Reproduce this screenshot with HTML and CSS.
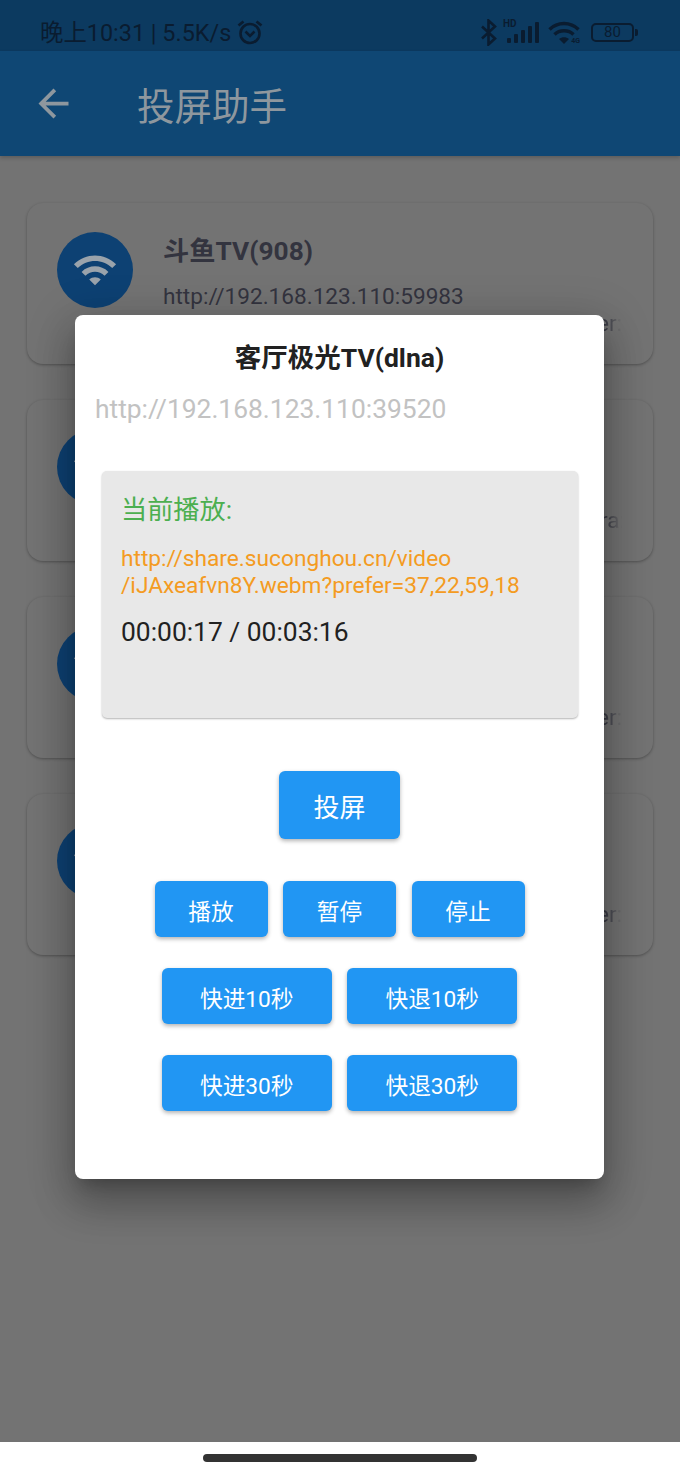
FILE: index.html

```html
<!DOCTYPE html>
<html lang="zh-CN">
<head>
  <meta charset="UTF-8" />
  <meta name="viewport" content="width=device-width, initial-scale=1.0">
  <title>投屏助手</title>
  <link rel="stylesheet" href="styles.css">
</head>
<body>
<div class="screen">
  <div class="status-bar">
    <span class="status-text">晚上10:31 | 5.5K/s</span>
    <svg class="alarm" width="28" height="26" viewBox="0 0 28 26">
      <circle cx="14" cy="14.5" r="9.5" fill="none" stroke-width="2.6"/>
      <path d="M9.5 12.5l4.5 4.5 4.5-4.5" fill="none" stroke-width="2.6"/>
      <path d="M2.5 6.5l5-4M25.5 6.5l-5-4" fill="none" stroke-width="2.8"/>
    </svg>
    <div class="status-icons">
      <svg class="bluetooth" width="18" height="27" viewBox="0 0 18 27">
        <path d="M2 7.5l13 12-6.5 6V1.500l6.500 6-13 12" fill="none" stroke-width="2.6"/>
      </svg>
      <div class="signal">
        <span class="hd">HD</span>
        <svg width="34" height="22" viewBox="0 0 34 22">
          <rect x="1" y="16" width="4" height="5" rx="1"/>
          <rect x="8" y="12" width="4" height="9" rx="1"/>
          <rect x="15" y="8" width="4" height="13" rx="1"/>
          <rect x="22" y="4" width="4" height="17" rx="1"/>
          <rect x="29" y="0" width="4" height="21" rx="1"/>
        </svg>
      </div>
      <div class="wifi-status">
        <svg width="32" height="23" viewBox="0 0 32 23">
          <path d="M1.500 8.500C9.500 0.500 22.500 0.500 30.500 8.500" fill="none" stroke-width="3.400"/>
          <path d="M6.500 13.500C11.500 8.500 20.500 8.500 25.500 13.500" fill="none" stroke-width="3.400"/>
          <path d="M11 18l5 5 5-5C18 15.500 14 15.500 11 18z"/>
        </svg>
        <span class="wifi-tag">4G</span>
      </div>
      <div class="battery">
        <span class="battery-body">80</span>
        <span class="battery-nub"></span>
      </div>
    </div>
  </div>

  <div class="app-bar">
    <svg class="back" width="45" height="45" viewBox="0 0 24 24">
      <path d="M20 11H7.830l5.590-5.590L12 4l-8 8 8 8 1.410-1.410L7.830 13H20v-2z"/>
    </svg>
    <h1>投屏助手</h1>
  </div>

  <div class="device-list">
    <div class="device-card">
      <div class="device-icon">
        <svg width="46" height="46" viewBox="0 0 24 24"><path d="M1 9l2 2c4.970-4.970 13.030-4.970 18 0l2-2C16.930 2.930 7.080 2.930 1 9zm8 8l3 3 3-3c-1.650-1.660-4.340-1.660-6 0zm-4-4l2 2c2.760-2.760 7.240-2.760 10 0l2-2C15.140 9.140 8.870 9.140 5 13z"/></svg>
      </div>
      <div class="device-info">
        <div class="device-name">斗鱼TV(908)</div>
        <div class="device-url">http://192.168.123.110:59983</div>
        <div class="device-type">urn:schemas-upnp-org:device:MediaRenderer:1</div>
      </div>
    </div>
    <div class="device-card">
      <div class="device-icon">
        <svg width="46" height="46" viewBox="0 0 24 24"><path d="M1 9l2 2c4.970-4.970 13.030-4.970 18 0l2-2C16.930 2.930 7.080 2.930 1 9zm8 8l3 3 3-3c-1.650-1.660-4.340-1.660-6 0zm-4-4l2 2c2.760-2.760 7.240-2.760 10 0l2-2C15.140 9.140 8.870 9.140 5 13z"/></svg>
      </div>
      <div class="device-info">
        <div class="device-name">客厅极光TV(dlna)</div>
        <div class="device-url">http://192.168.123.110:39520</div>
        <div class="device-type">urn:schemas-upnp-org:device:UMediaCamera:1</div>
      </div>
    </div>
    <div class="device-card">
      <div class="device-icon">
        <svg width="46" height="46" viewBox="0 0 24 24"><path d="M1 9l2 2c4.970-4.970 13.030-4.970 18 0l2-2C16.930 2.930 7.080 2.930 1 9zm8 8l3 3 3-3c-1.650-1.660-4.340-1.660-6 0zm-4-4l2 2c2.760-2.760 7.240-2.760 10 0l2-2C15.140 9.140 8.870 9.140 5 13z"/></svg>
      </div>
      <div class="device-info">
        <div class="device-name">斗鱼TV(908)</div>
        <div class="device-url">http://192.168.123.110:59983</div>
        <div class="device-type">urn:schemas-upnp-org:device:MediaRenderer:1</div>
      </div>
    </div>
    <div class="device-card">
      <div class="device-icon">
        <svg width="46" height="46" viewBox="0 0 24 24"><path d="M1 9l2 2c4.970-4.970 13.030-4.970 18 0l2-2C16.930 2.930 7.080 2.930 1 9zm8 8l3 3 3-3c-1.650-1.660-4.340-1.660-6 0zm-4-4l2 2c2.760-2.760 7.240-2.760 10 0l2-2C15.140 9.140 8.870 9.140 5 13z"/></svg>
      </div>
      <div class="device-info">
        <div class="device-name">斗鱼TV(908)</div>
        <div class="device-url">http://192.168.123.110:59983</div>
        <div class="device-type">urn:schemas-upnp-org:device:MediaRenderer:1</div>
      </div>
    </div>
  </div>

  <div class="dialog">
    <h2>客厅极光TV(dlna)</h2>
    <div class="dialog-url">http://192.168.123.110:39520</div>
    <div class="now-playing">
      <div class="now-label">当前播放:</div>
      <div class="now-link">http://share.suconghou.cn/video<br>/iJAxeafvn8Y.webm?prefer=37,22,59,18</div>
      <div class="now-time">00:00:17 / 00:03:16</div>
    </div>
    <div class="btn-row cast-row"><button class="btn btn-cast">投屏</button></div>
    <div class="btn-row"><button class="btn btn-small">播放</button><button class="btn btn-small">暂停</button><button class="btn btn-small">停止</button></div>
    <div class="btn-row"><button class="btn btn-wide">快进10秒</button><button class="btn btn-wide">快退10秒</button></div>
    <div class="btn-row"><button class="btn btn-wide">快进30秒</button><button class="btn btn-wide">快退30秒</button></div>
  </div>
</div>
<div class="home-bar"><span class="home-pill"></span></div>
</body>
</html>
```

FILE: styles.css

```css
* {
  box-sizing: border-box;
}

html, body {
  height: 100%;
}

body {
  margin: 0;
  overflow: hidden;
  background: #fff;
  font-family: Roboto, "Noto Sans CJK SC", sans-serif;
}

.screen {
  position: relative;
  height: 1442px;
  overflow: hidden;
  background: #737373;
}

/* status bar */
.status-bar {
  display: flex;
  align-items: center;
  height: 51px;
  padding: 13px 42px 0 40px;
  background: #0c3a60;
  color: #0a1c30;
}

.status-text {
  padding-top: 1px;
  font-size: 23.4px;
  line-height: 30px;
}

.alarm {
  flex: none;
  margin-left: 5px;
  stroke: #0a1c30;
}

.status-icons {
  display: flex;
  align-items: center;
  margin-left: auto;
}

.bluetooth {
  stroke: #0a1c30;
}

.signal {
  position: relative;
  width: 34px;
  height: 22px;
  margin-left: 8px;
  margin-top: 2px;
  fill: #0a1c30;
}

.hd {
  position: absolute;
  left: -3px;
  top: -3px;
  font-size: 10px;
  font-weight: 700;
  line-height: 10px;
}

.signal svg {
  display: block;
}

.wifi-status {
  position: relative;
  margin-left: 8px;
  stroke: #0a1c30;
  fill: #0a1c30;
}

.wifi-status svg {
  display: block;
}

.wifi-status path:last-child {
  stroke: none;
}

.wifi-tag {
  position: absolute;
  right: 0;
  bottom: -1px;
  font-size: 7px;
  font-weight: 700;
  line-height: 8px;
}

.battery {
  display: flex;
  align-items: center;
  margin-left: 11px;
}

.battery-body {
  width: 43px;
  height: 19px;
  border: 2px solid #0a1c30;
  border-radius: 5px;
  font-size: 15px;
  line-height: 15px;
  text-align: center;
  color: #0a1c30;
}

.battery-nub {
  width: 3px;
  height: 7px;
  margin-left: 1px;
  border-radius: 0 2px 2px 0;
  background: #0a1c30;
}

/* app bar */
.app-bar {
  display: flex;
  align-items: center;
  height: 105px;
  padding-left: 31px;
  background: #0f4774;
  box-shadow: 0 2px 4px rgba(0, 0, 0, .2);
}

.back {
  fill: #8e979e;
}

.app-bar h1 {
  margin: 0 0 0 61px;
  font-size: 37.5px;
  font-weight: 400;
  color: #8e979e;
}

/* device list behind the dialog */
.device-list {
  display: flex;
  flex-direction: column;
  gap: 36px;
  padding: 47px 27px 0;
}

.device-card {
  display: flex;
  height: 161px;
  padding: 29px 30px;
  border-radius: 16px;
  background: #737373;
  box-shadow: 0 1px 3px rgba(0, 0, 0, .3);
}

.device-icon {
  display: flex;
  align-items: center;
  justify-content: center;
  flex: none;
  width: 76px;
  height: 76px;
  border-radius: 50%;
  background: #0d4173;
  fill: #9aa3ab;
}

.device-info {
  min-width: 0;
  margin-left: 30px;
  color: #33343f;
}

.device-name {
  font-size: 26.300px;
  font-weight: 700;
  line-height: 38px;
}

.device-url,
.device-type {
  font-size: 22.6px;
  line-height: 27px;
  white-space: nowrap;
}

.device-url {
  margin-top: 13px;
}

.device-type {
  width: 459px;
  overflow: hidden;
  -webkit-mask-image: linear-gradient(to right, #000 96%, transparent);
  mask-image: linear-gradient(to right, #000 96%, transparent);
}

/* dialog */
.dialog {
  position: absolute;
  left: 75px;
  top: 315px;
  width: 529px;
  height: 864px;
  padding-top: 26px;
  border-radius: 8px;
  background: #fff;
  box-shadow: 0 24px 38px 3px rgba(0, 0, 0, .22), 0 9px 46px 8px rgba(0, 0, 0, .14), 0 11px 15px -7px rgba(0, 0, 0, .2);
}

.dialog h2 {
  margin: 0;
  font-size: 26.5px;
  font-weight: 700;
  line-height: 34px;
  text-align: center;
  color: #212121;
}

.dialog-url {
  margin: 17px 0 0 20px;
  font-size: 26.4px;
  line-height: 34px;
  color: #c2c2c2;
}

.now-playing {
  height: 247px;
  margin: 45px 26px 0 27px;
  padding: 21px 19px 20px;
  border-radius: 5px;
  background: #e8e8e8;
  box-shadow: 0 1px 2px rgba(0, 0, 0, .3);
}

.now-label {
  font-size: 26.2px;
  line-height: 36px;
  color: #4caf50;
}

.now-link {
  margin-top: 17px;
  font-size: 22.7px;
  line-height: 27px;
  color: #f49b22;
}

.now-time {
  margin-top: 15px;
  font-size: 26.4px;
  line-height: 36px;
  color: #212121;
}

.btn-row {
  display: flex;
  justify-content: center;
  gap: 15.5px;
  margin-top: 31px;
}

.cast-row {
  margin-top: 53px;
  margin-bottom: 42px;
}

.btn {
  padding: 2px 0 0;
  border: none;
  border-radius: 6px;
  background: #2196f3;
  color: #fff;
  font-family: inherit;
  font-size: 22.7px;
  box-shadow: 0 2px 4px rgba(0, 0, 0, .3);
}

.btn-cast {
  width: 121px;
  height: 68px;
  padding: 0;
  font-size: 26px;
}

.btn-small {
  width: 113px;
  height: 56px;
}

.btn-wide {
  width: 170px;
  height: 56px;
}

/* gesture bar */
.home-bar {
  display: flex;
  justify-content: center;
  height: 31px;
  padding-top: 12px;
  background: #fff;
}

.home-pill {
  width: 274px;
  height: 8px;
  border-radius: 4px;
  background: #333;
}
```
